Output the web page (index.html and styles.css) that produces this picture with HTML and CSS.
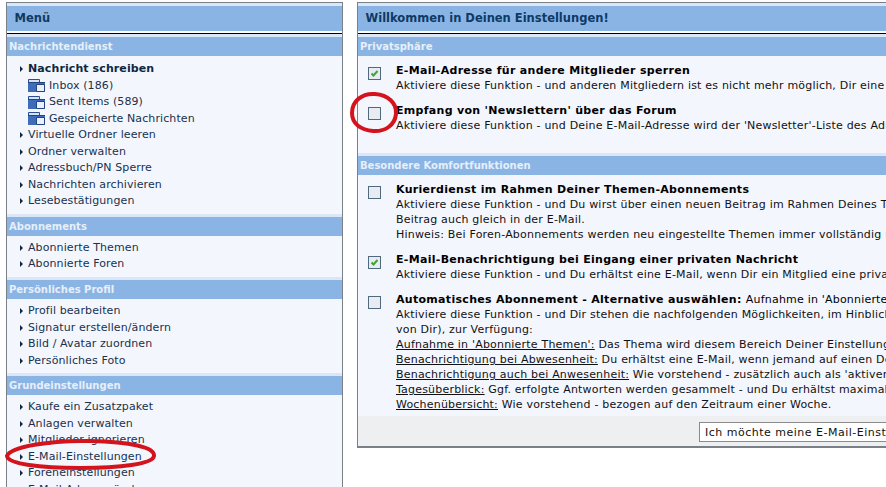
FILE: index.html
```html
<!DOCTYPE html>
<html lang="de">
<head>
<meta charset="utf-8">
<title>Einstellungen</title>
<link rel="stylesheet" href="styles.css">
</head>
<body>
<div class="page">
  <aside class="panel menu">
    <h1 class="title">Menü</h1>
    <div class="rule"></div>
    <section class="group">
      <h2 class="head">Nachrichtendienst</h2>
      <ul class="list">
        <li class="item strong">Nachricht schreiben</li>
        <li class="folder"><svg class="ficon" viewBox="0 0 17 13"><path d="M.5 3.5V.5h11v3" fill="#d5e1f4" stroke="#2c4f94"/><path d="M0 3h17v10H0z" fill="#3f6cb8"/><path d="M8.5 5.5h8v7h-8z" fill="#e8f0fb" stroke="#24447f"/><path d="M0 3.5h17" stroke="#24447f"/></svg>Inbox (186)</li>
        <li class="folder"><svg class="ficon" viewBox="0 0 17 13"><path d="M.5 3.5V.5h11v3" fill="#d5e1f4" stroke="#2c4f94"/><path d="M0 3h17v10H0z" fill="#3f6cb8"/><path d="M8.5 5.5h8v7h-8z" fill="#e8f0fb" stroke="#24447f"/><path d="M0 3.5h17" stroke="#24447f"/></svg>Sent Items (589)</li>
        <li class="folder"><svg class="ficon" viewBox="0 0 17 13"><path d="M.5 3.5V.5h11v3" fill="#d5e1f4" stroke="#2c4f94"/><path d="M0 3h17v10H0z" fill="#3f6cb8"/><path d="M8.5 5.5h8v7h-8z" fill="#e8f0fb" stroke="#24447f"/><path d="M0 3.5h17" stroke="#24447f"/></svg>Gespeicherte Nachrichten</li>
        <li class="item">Virtuelle Ordner leeren</li>
        <li class="item">Ordner verwalten</li>
        <li class="item">Adressbuch/PN Sperre</li>
        <li class="item">Nachrichten archivieren</li>
        <li class="item">Lesebestätigungen</li>
      </ul>
    </section>
    <section class="group">
      <h2 class="head">Abonnements</h2>
      <ul class="list">
        <li class="item">Abonnierte Themen</li>
        <li class="item">Abonnierte Foren</li>
      </ul>
    </section>
    <section class="group">
      <h2 class="head">Persönliches Profil</h2>
      <ul class="list">
        <li class="item">Profil bearbeiten</li>
        <li class="item">Signatur erstellen/ändern</li>
        <li class="item">Bild / Avatar zuordnen</li>
        <li class="item">Persönliches Foto</li>
      </ul>
    </section>
    <section class="group">
      <h2 class="head">Grundeinstellungen</h2>
      <ul class="list">
        <li class="item">Kaufe ein Zusatzpaket</li>
        <li class="item">Anlagen verwalten</li>
        <li class="item">Mitglieder ignorieren</li>
        <li class="item">E-Mail-Einstellungen</li>
        <li class="item">Foreneinstellungen</li>
        <li class="item">E-Mail-Adresse ändern</li>
      </ul>
    </section>
  </aside>

  <main class="panel settings">
    <h1 class="title">Willkommen in Deinen Einstellungen!</h1>
    <div class="rule"></div>
    <h2 class="head">Privatsphäre</h2>
    <div class="rows first">
      <div class="row">
        <span class="box checked"><svg viewBox="0 0 11 11" class="tick"><path d="M2.5 5.5l2 2L8.5 3" fill="none" stroke="#3fa535" stroke-width="2"/></svg></span>
        <div class="copy">
          <h3 class="label">E-Mail-Adresse für andere Mitglieder sperren</h3>
          <p>Aktiviere diese Funktion - und anderen Mitgliedern ist es nicht mehr möglich, Dir eine E-Mail zu senden</p>
        </div>
      </div>
      <div class="row">
        <span class="box"></span>
        <div class="copy">
          <h3 class="label">Empfang von 'Newslettern' über das Forum</h3>
          <p>Aktiviere diese Funktion - und Deine E-Mail-Adresse wird der 'Newsletter'-Liste des Administrators hinzugefügt</p>
        </div>
      </div>
    </div>
    <h2 class="head">Besondere Komfortfunktionen</h2>
    <div class="rows second">
      <div class="row">
        <span class="box"></span>
        <div class="copy">
          <h3 class="label">Kurierdienst im Rahmen Deiner Themen-Abonnements</h3>
          <p>Aktiviere diese Funktion - und Du wirst über einen neuen Beitrag im Rahmen Deines Themen-Abonnements</p>
          <p>Beitrag auch gleich in der E-Mail.</p>
          <p>Hinweis: Bei Foren-Abonnements werden neu eingestellte Themen immer vollständig mitgeschickt</p>
        </div>
      </div>
      <div class="row">
        <span class="box checked"><svg viewBox="0 0 11 11" class="tick"><path d="M2.5 5.5l2 2L8.5 3" fill="none" stroke="#3fa535" stroke-width="2"/></svg></span>
        <div class="copy">
          <h3 class="label">E-Mail-Benachrichtigung bei Eingang einer privaten Nachricht</h3>
          <p>Aktiviere diese Funktion - und Du erhältst eine E-Mail, wenn Dir ein Mitglied eine private Nachricht sendet</p>
        </div>
      </div>
      <div class="row">
        <span class="box"></span>
        <div class="copy">
          <h3 class="label">Automatisches Abonnement - Alternative auswählen: <span class="aside">Aufnahme in 'Abonnierte Themen'</span></h3>
          <p>Aktiviere diese Funktion - und Dir stehen die nachfolgenden Möglichkeiten, im Hinblick auf Beiträge (auch</p>
          <p>von Dir), zur Verfügung:</p>
          <p><u>Aufnahme in 'Abonnierte Themen':</u> Das Thema wird diesem Bereich Deiner Einstellungen hinzugefügt</p>
          <p><u>Benachrichtigung bei Abwesenheit:</u> Du erhältst eine E-Mail, wenn jemand auf einen Deiner Beiträge antwortet</p>
          <p><u>Benachrichtigung auch bei Anwesenheit:</u> Wie vorstehend - zusätzlich auch als 'aktiver' Besucher</p>
          <p><u>Tagesüberblick:</u> Ggf. erfolgte Antworten werden gesammelt - und Du erhältst maximal eine E-Mail</p>
          <p><u>Wochenübersicht:</u> Wie vorstehend - bezogen auf den Zeitraum einer Woche.</p>
        </div>
      </div>
    </div>
    <div class="foot"><button class="save" type="button">Ich möchte meine E-Mail-Einstellungen speichern</button></div>
  </main>
</div>
<svg class="marks" viewBox="0 0 886 487" aria-hidden="true">
  <path class="mark" d="M7 456C10 447 50 440 90 441C130 442 155 447 154 456C153 464 120 468 80 468C40 468 8 464 7 456Z"/>
  <path class="mark" d="M352 113C352 101 362 93 375 94C388 95 397 103 396 114C395 125 385 132 373 131C361 130 352 124 352 113Z"/>
</svg>
</body>
</html>
```
FILE: styles.css
```css
* { box-sizing: border-box; }
html, body { margin: 0; height: 487px; overflow: hidden; background: #fff; }
body { position: relative; width: 886px; font: 11px/15px "DejaVu Sans", Verdana, sans-serif; color: #10273f; }
h1, h2, h3, p, ul { margin: 0; padding: 0; font-size: inherit; }
ul { list-style: none; }

.page { display: flex; align-items: flex-start; gap: 14px; padding: 2px 0 0 6px; width: 1200px; }
.panel { border: 1px solid #7a8088; border-bottom-width: 2px; background: #f4f6fe; }
.menu { width: 337px; flex: none; height: 600px; }
.settings { width: 760px; flex: none; height: 446px; display: flex; flex-direction: column; }

.title { height: 28px; border-top: 3px solid #dbe7f6; background: #8ab4e4; color: #0e3a63; font-size: 11.5px; font-weight: bold; line-height: 24px; padding-left: 7.5px; flex: none; }
.rule { height: 3px; flex: none; background: #fff; border-bottom: 1px solid #000; }
.head { height: 22px; flex: none; border-top: 3px solid #dbe7f6; background: #8ab4e4; color: #e6effa; font-size: 10px; font-weight: bold; line-height: 20px; padding-left: 2px; }

.group { padding-bottom: 4px; }
.group:nth-of-type(2) { padding-bottom: 4.5px; }
.list { padding: 4px 0 0 12px; }
.group:first-of-type .list { padding-top: 5px; }
.item, .folder { height: 16.5px; line-height: 16.5px; letter-spacing: .1px; white-space: nowrap; color: #17324d; }
.item { padding-left: 9px; position: relative; }
.item::before { content: ""; position: absolute; left: 1px; top: 5px; border-left: 3px solid #10273f; border-top: 3px solid transparent; border-bottom: 3px solid transparent; }
.strong { font-weight: bold; color: #10273f; }
.folder { display: flex; align-items: center; gap: 4px; padding-left: 9px; }
.ficon { width: 17px; height: 13px; flex: none; }

.rows { display: flex; flex-direction: column; }
.first { height: 97px; flex: none; padding-top: 7px; gap: 10px; }
.second { flex: 1; padding-top: 7px; gap: 10px; }
.row { display: flex; gap: 15px; padding-left: 10px; }
.box { width: 13px; height: 13px; flex: none; margin-top: 4px; border: 1px solid #4f6a7c; background: #e8ebf1; display: flex; }
.tick { width: 11px; height: 11px; }
.copy { white-space: nowrap; line-height: 15px; color: #111; letter-spacing: .2px; }
.label { font-size: 11px; font-weight: bold; letter-spacing: .3px; color: #000; }
.aside { font-weight: normal; letter-spacing: .2px; }
.foot { height: 30px; background: #eeeff1; padding: 6px 0 0 341px; flex: none; }
.save { height: 20px; width: 400px; padding: 0 5px; text-align: left; background: #fff; border: 1px solid #8a8a8a; font: 11px "DejaVu Sans", Verdana, sans-serif; letter-spacing: .5px; color: #111; white-space: nowrap; }

.marks { position: absolute; left: 0; top: 0; width: 886px; height: 487px; pointer-events: none; }
.mark { fill: none; stroke: #d4141c; stroke-width: 4; }
```
